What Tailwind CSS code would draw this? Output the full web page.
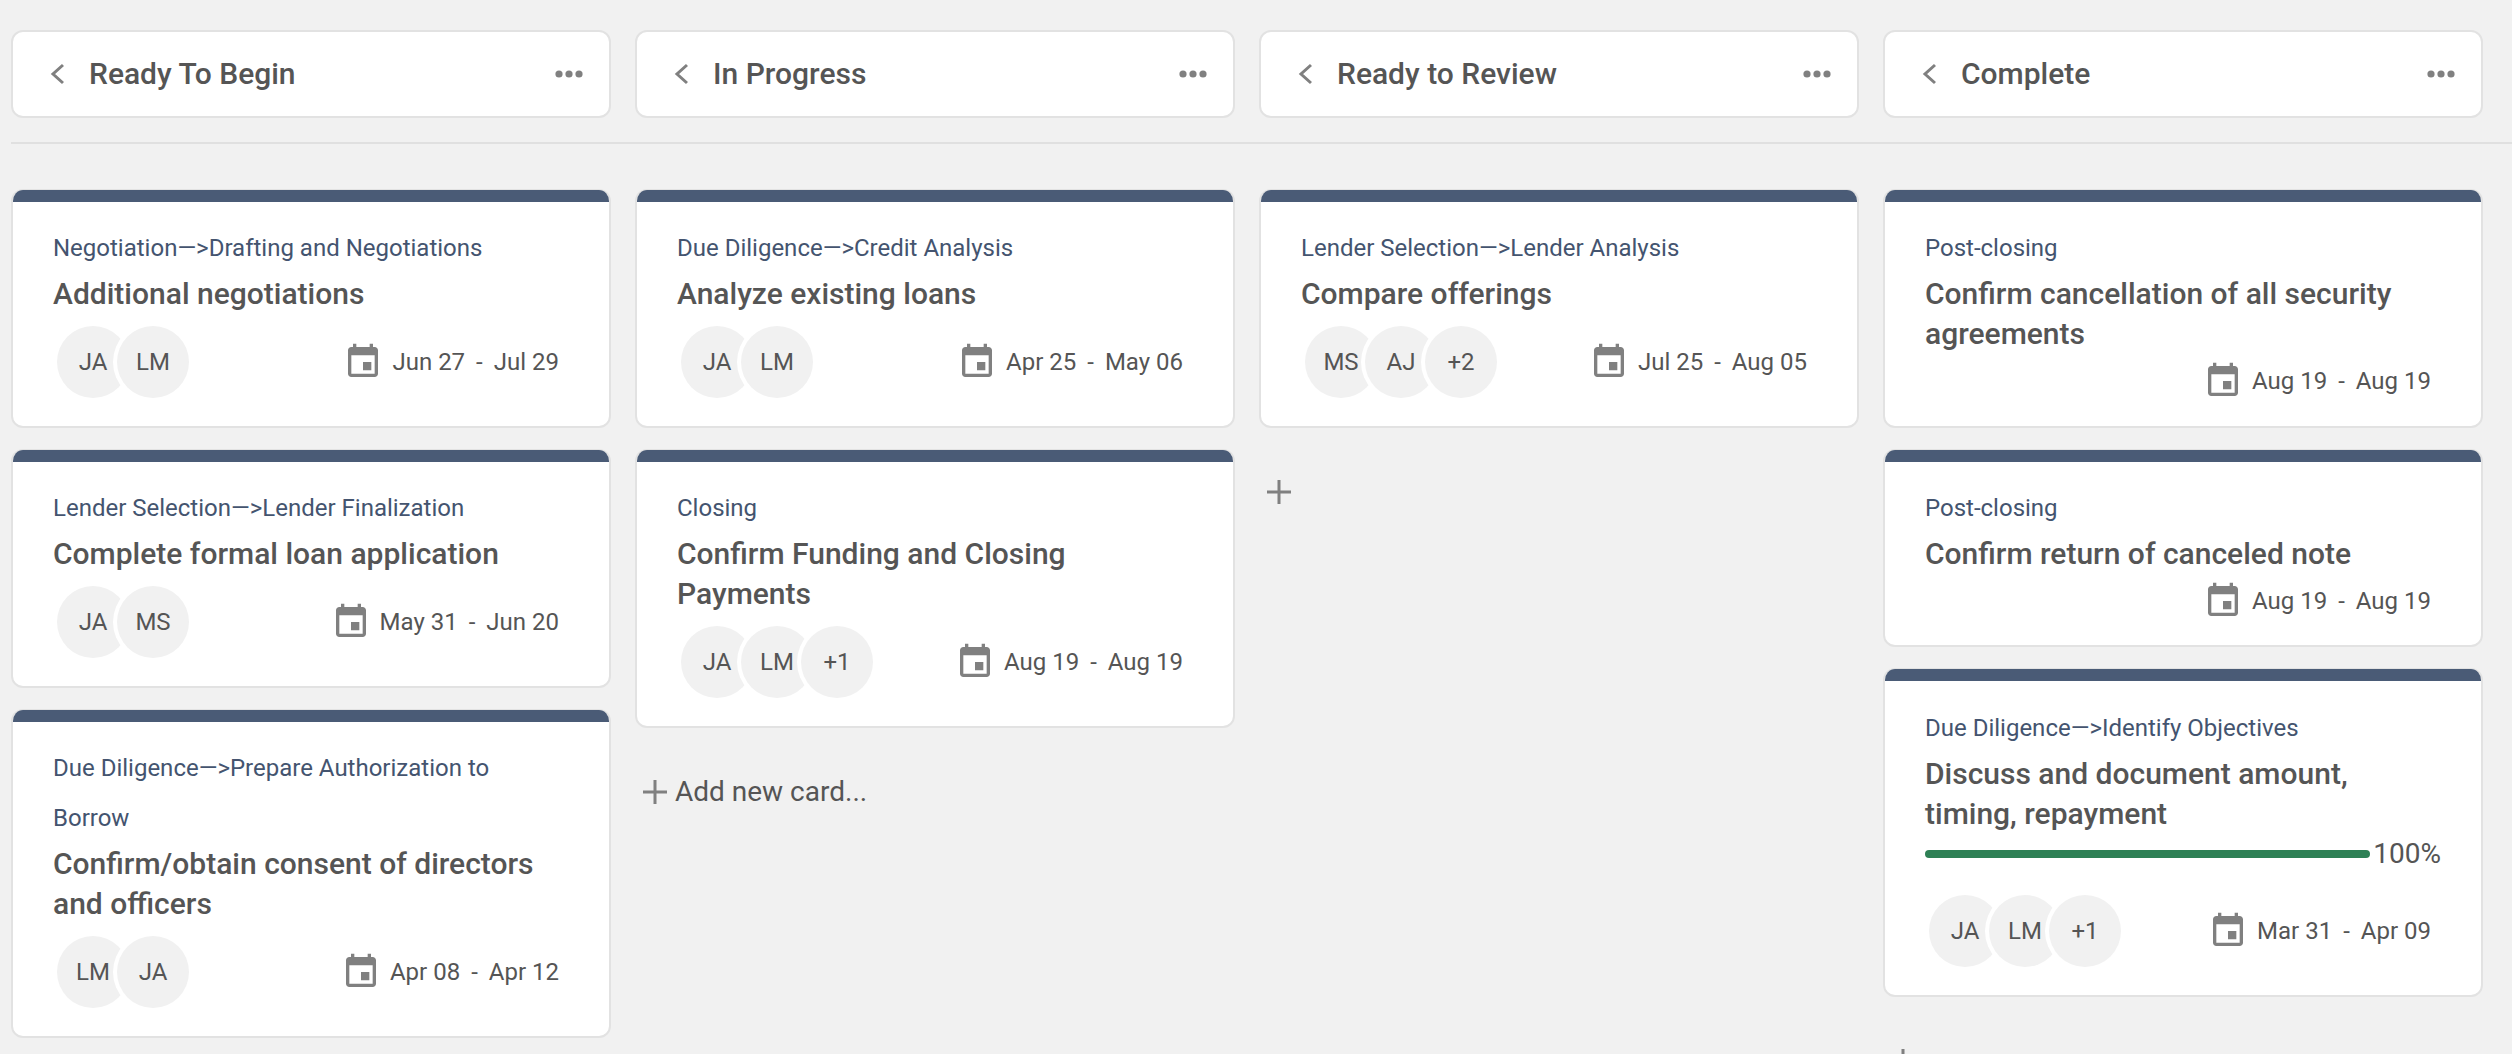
<!DOCTYPE html>
<html lang="en">
<head>
  <meta charset="UTF-8" />
  <title>Board</title>
  <script src="https://cdn.jsdelivr.net/npm/@tailwindcss/browser@4"></script>
</head>
<body class="bg-[#f1f1f1] h-[1054px] overflow-hidden font-['Roboto',sans-serif] text-[#555555]">
  <!-- Column headers -->
  <div class="pt-[30px] ml-[11px] h-[144px] border-b-2 border-[#e0e0e0]">
    <div class="grid grid-cols-[600px_600px_600px_600px] gap-[24px]">
      <div class="h-[88px] bg-white border-2 border-[#e2e2e2] rounded-[12px] flex items-center pl-[37px] pr-[26px]">
        <svg class="w-[16px] h-[24px] shrink-0" viewBox="0 0 16 24" fill="none" stroke="#808080" stroke-width="3"><path d="M13 3 L3 12 L13 21"/></svg>
        <span class="ml-[23px] pb-[2px] flex-1 text-[30px] font-medium">Ready To Begin</span>
        <svg class="w-[28px] h-[8px]" viewBox="0 0 28 8" fill="#808080"><circle cx="4" cy="4" r="3.6"/><circle cx="14" cy="4" r="3.6"/><circle cx="24" cy="4" r="3.6"/></svg>
      </div>
      <div class="h-[88px] bg-white border-2 border-[#e2e2e2] rounded-[12px] flex items-center pl-[37px] pr-[26px]">
        <svg class="w-[16px] h-[24px] shrink-0" viewBox="0 0 16 24" fill="none" stroke="#808080" stroke-width="3"><path d="M13 3 L3 12 L13 21"/></svg>
        <span class="ml-[23px] pb-[2px] flex-1 text-[30px] font-medium">In Progress</span>
        <svg class="w-[28px] h-[8px]" viewBox="0 0 28 8" fill="#808080"><circle cx="4" cy="4" r="3.6"/><circle cx="14" cy="4" r="3.6"/><circle cx="24" cy="4" r="3.6"/></svg>
      </div>
      <div class="h-[88px] bg-white border-2 border-[#e2e2e2] rounded-[12px] flex items-center pl-[37px] pr-[26px]">
        <svg class="w-[16px] h-[24px] shrink-0" viewBox="0 0 16 24" fill="none" stroke="#808080" stroke-width="3"><path d="M13 3 L3 12 L13 21"/></svg>
        <span class="ml-[23px] pb-[2px] flex-1 text-[30px] font-medium">Ready to Review</span>
        <svg class="w-[28px] h-[8px]" viewBox="0 0 28 8" fill="#808080"><circle cx="4" cy="4" r="3.6"/><circle cx="14" cy="4" r="3.6"/><circle cx="24" cy="4" r="3.6"/></svg>
      </div>
      <div class="h-[88px] bg-white border-2 border-[#e2e2e2] rounded-[12px] flex items-center pl-[37px] pr-[26px]">
        <svg class="w-[16px] h-[24px] shrink-0" viewBox="0 0 16 24" fill="none" stroke="#808080" stroke-width="3"><path d="M13 3 L3 12 L13 21"/></svg>
        <span class="ml-[23px] pb-[2px] flex-1 text-[30px] font-medium">Complete</span>
        <svg class="w-[28px] h-[8px]" viewBox="0 0 28 8" fill="#808080"><circle cx="4" cy="4" r="3.6"/><circle cx="14" cy="4" r="3.6"/><circle cx="24" cy="4" r="3.6"/></svg>
      </div>
    </div>
  </div>

  <!-- Board -->
  <div class="pt-[45px] pl-[11px] grid grid-cols-[600px_600px_600px_600px] gap-[24px] items-start">

    <!-- Ready To Begin -->
    <div class="flex flex-col gap-[21px]">
      <div class="bg-white border-2 border-t border-[#e2e2e2] rounded-[12px] overflow-hidden pb-[26px]">
        <div class="h-[12px] bg-[#4a5b76]"></div>
        <div class="pl-[40px] pr-[50px] pt-[21px]">
          <p class="text-[24px] leading-[50px] text-[#44546f]">Negotiation—&gt;Drafting and Negotiations</p>
          <p class="pt-px text-[30px] leading-[40px] font-medium">Additional negotiations</p>
          <div class="mt-[12px] mb-[2px] h-[72px] flex items-center justify-between">
            <div class="flex ml-[4px] text-[24px]">
              <div class="w-[72px] h-[72px] rounded-full bg-[#f1f1f1] flex items-center justify-center">JA</div>
              <div class="w-[72px] h-[72px] rounded-full bg-[#f1f1f1] flex items-center justify-center -ml-[12px] ring-4 ring-white">LM</div>
            </div>
            <div class="flex items-center text-[24px]">
              <svg class="w-[40px] h-[40px] mr-[9px]" viewBox="0 0 24 24" fill="#808080"><path d="M17 12h-5v5h5v-5zM16 1v2H8V1H6v2H5c-1.11 0-1.99.9-1.99 2L3 19c0 1.1.89 2 2 2h14c1.1 0 2-.9 2-2V5c0-1.1-.9-2-2-2h-1V1h-2zm3 18H5V8h14v11z"/></svg>
              <span>Jun 27</span><span class="mx-[11px]">-</span><span>Jul 29</span>
            </div>
          </div>
        </div>
      </div>
      <div class="bg-white border-2 border-t border-[#e2e2e2] rounded-[12px] overflow-hidden pb-[26px]">
        <div class="h-[12px] bg-[#4a5b76]"></div>
        <div class="pl-[40px] pr-[50px] pt-[21px]">
          <p class="text-[24px] leading-[50px] text-[#44546f]">Lender Selection—&gt;Lender Finalization</p>
          <p class="pt-px text-[30px] leading-[40px] font-medium">Complete formal loan application</p>
          <div class="mt-[12px] mb-[2px] h-[72px] flex items-center justify-between">
            <div class="flex ml-[4px] text-[24px]">
              <div class="w-[72px] h-[72px] rounded-full bg-[#f1f1f1] flex items-center justify-center">JA</div>
              <div class="w-[72px] h-[72px] rounded-full bg-[#f1f1f1] flex items-center justify-center -ml-[12px] ring-4 ring-white">MS</div>
            </div>
            <div class="flex items-center text-[24px]">
              <svg class="w-[40px] h-[40px] mr-[9px]" viewBox="0 0 24 24" fill="#808080"><path d="M17 12h-5v5h5v-5zM16 1v2H8V1H6v2H5c-1.11 0-1.99.9-1.99 2L3 19c0 1.1.89 2 2 2h14c1.1 0 2-.9 2-2V5c0-1.1-.9-2-2-2h-1V1h-2zm3 18H5V8h14v11z"/></svg>
              <span>May 31</span><span class="mx-[11px]">-</span><span>Jun 20</span>
            </div>
          </div>
        </div>
      </div>
      <div class="bg-white border-2 border-t border-[#e2e2e2] rounded-[12px] overflow-hidden pb-[26px]">
        <div class="h-[12px] bg-[#4a5b76]"></div>
        <div class="pl-[40px] pr-[50px] pt-[21px]">
          <p class="text-[24px] leading-[50px] text-[#44546f]">Due Diligence—&gt;Prepare Authorization to Borrow</p>
          <p class="pt-px text-[30px] leading-[40px] font-medium">Confirm/obtain consent of directors and officers</p>
          <div class="mt-[12px] mb-[2px] h-[72px] flex items-center justify-between">
            <div class="flex ml-[4px] text-[24px]">
              <div class="w-[72px] h-[72px] rounded-full bg-[#f1f1f1] flex items-center justify-center">LM</div>
              <div class="w-[72px] h-[72px] rounded-full bg-[#f1f1f1] flex items-center justify-center -ml-[12px] ring-4 ring-white">JA</div>
            </div>
            <div class="flex items-center text-[24px]">
              <svg class="w-[40px] h-[40px] mr-[9px]" viewBox="0 0 24 24" fill="#808080"><path d="M17 12h-5v5h5v-5zM16 1v2H8V1H6v2H5c-1.11 0-1.99.9-1.99 2L3 19c0 1.1.89 2 2 2h14c1.1 0 2-.9 2-2V5c0-1.1-.9-2-2-2h-1V1h-2zm3 18H5V8h14v11z"/></svg>
              <span>Apr 08</span><span class="mx-[11px]">-</span><span>Apr 12</span>
            </div>
          </div>
        </div>
      </div>
    </div>

    <!-- In Progress -->
    <div class="flex flex-col gap-[21px]">
      <div class="bg-white border-2 border-t border-[#e2e2e2] rounded-[12px] overflow-hidden pb-[26px]">
        <div class="h-[12px] bg-[#4a5b76]"></div>
        <div class="pl-[40px] pr-[50px] pt-[21px]">
          <p class="text-[24px] leading-[50px] text-[#44546f]">Due Diligence—&gt;Credit Analysis</p>
          <p class="pt-px text-[30px] leading-[40px] font-medium">Analyze existing loans</p>
          <div class="mt-[12px] mb-[2px] h-[72px] flex items-center justify-between">
            <div class="flex ml-[4px] text-[24px]">
              <div class="w-[72px] h-[72px] rounded-full bg-[#f1f1f1] flex items-center justify-center">JA</div>
              <div class="w-[72px] h-[72px] rounded-full bg-[#f1f1f1] flex items-center justify-center -ml-[12px] ring-4 ring-white">LM</div>
            </div>
            <div class="flex items-center text-[24px]">
              <svg class="w-[40px] h-[40px] mr-[9px]" viewBox="0 0 24 24" fill="#808080"><path d="M17 12h-5v5h5v-5zM16 1v2H8V1H6v2H5c-1.11 0-1.99.9-1.99 2L3 19c0 1.1.89 2 2 2h14c1.1 0 2-.9 2-2V5c0-1.1-.9-2-2-2h-1V1h-2zm3 18H5V8h14v11z"/></svg>
              <span>Apr 25</span><span class="mx-[11px]">-</span><span>May 06</span>
            </div>
          </div>
        </div>
      </div>
      <div class="bg-white border-2 border-t border-[#e2e2e2] rounded-[12px] overflow-hidden pb-[26px]">
        <div class="h-[12px] bg-[#4a5b76]"></div>
        <div class="pl-[40px] pr-[50px] pt-[21px]">
          <p class="text-[24px] leading-[50px] text-[#44546f]">Closing</p>
          <p class="pt-px text-[30px] leading-[40px] font-medium max-w-[420px]">Confirm Funding and Closing Payments</p>
          <div class="mt-[12px] mb-[2px] h-[72px] flex items-center justify-between">
            <div class="flex ml-[4px] text-[24px]">
              <div class="w-[72px] h-[72px] rounded-full bg-[#f1f1f1] flex items-center justify-center">JA</div>
              <div class="w-[72px] h-[72px] rounded-full bg-[#f1f1f1] flex items-center justify-center -ml-[12px] ring-4 ring-white">LM</div>
              <div class="w-[72px] h-[72px] rounded-full bg-[#f1f1f1] flex items-center justify-center -ml-[12px] ring-4 ring-white">+1</div>
            </div>
            <div class="flex items-center text-[24px]">
              <svg class="w-[40px] h-[40px] mr-[9px]" viewBox="0 0 24 24" fill="#808080"><path d="M17 12h-5v5h5v-5zM16 1v2H8V1H6v2H5c-1.11 0-1.99.9-1.99 2L3 19c0 1.1.89 2 2 2h14c1.1 0 2-.9 2-2V5c0-1.1-.9-2-2-2h-1V1h-2zm3 18H5V8h14v11z"/></svg>
              <span>Aug 19</span><span class="mx-[11px]">-</span><span>Aug 19</span>
            </div>
          </div>
        </div>
      </div>
      <div class="mt-[23px] pl-[8px] h-[40px] flex items-center text-[28px]">
        <svg class="w-[24px] h-[24px] mr-[8px]" viewBox="0 0 24 24" stroke="#808080" stroke-width="3"><path d="M12 0V24M0 12H24"/></svg>
        <span>Add new card...</span>
      </div>
    </div>

    <!-- Ready to Review -->
    <div class="flex flex-col gap-[21px]">
      <div class="bg-white border-2 border-t border-[#e2e2e2] rounded-[12px] overflow-hidden pb-[26px]">
        <div class="h-[12px] bg-[#4a5b76]"></div>
        <div class="pl-[40px] pr-[50px] pt-[21px]">
          <p class="text-[24px] leading-[50px] text-[#44546f]">Lender Selection—&gt;Lender Analysis</p>
          <p class="pt-px text-[30px] leading-[40px] font-medium">Compare offerings</p>
          <div class="mt-[12px] mb-[2px] h-[72px] flex items-center justify-between">
            <div class="flex ml-[4px] text-[24px]">
              <div class="w-[72px] h-[72px] rounded-full bg-[#f1f1f1] flex items-center justify-center">MS</div>
              <div class="w-[72px] h-[72px] rounded-full bg-[#f1f1f1] flex items-center justify-center -ml-[12px] ring-4 ring-white">AJ</div>
              <div class="w-[72px] h-[72px] rounded-full bg-[#f1f1f1] flex items-center justify-center -ml-[12px] ring-4 ring-white">+2</div>
            </div>
            <div class="flex items-center text-[24px]">
              <svg class="w-[40px] h-[40px] mr-[9px]" viewBox="0 0 24 24" fill="#808080"><path d="M17 12h-5v5h5v-5zM16 1v2H8V1H6v2H5c-1.11 0-1.99.9-1.99 2L3 19c0 1.1.89 2 2 2h14c1.1 0 2-.9 2-2V5c0-1.1-.9-2-2-2h-1V1h-2zm3 18H5V8h14v11z"/></svg>
              <span>Jul 25</span><span class="mx-[11px]">-</span><span>Aug 05</span>
            </div>
          </div>
        </div>
      </div>
      <div class="mt-[23px] pl-[8px] h-[40px] flex items-center">
        <svg class="w-[24px] h-[24px]" viewBox="0 0 24 24" stroke="#808080" stroke-width="3"><path d="M12 0V24M0 12H24"/></svg>
      </div>
    </div>

    <!-- Complete -->
    <div class="flex flex-col gap-[21px]">
      <div class="bg-white border-2 border-t border-[#e2e2e2] rounded-[12px] overflow-hidden pb-[26px]">
        <div class="h-[12px] bg-[#4a5b76]"></div>
        <div class="pl-[40px] pr-[50px] pt-[21px]">
          <p class="text-[24px] leading-[50px] text-[#44546f]">Post-closing</p>
          <p class="pt-px text-[30px] leading-[40px] font-medium">Confirm cancellation of all security agreements</p>
          <div class="mt-[8px] h-[38px] flex items-center justify-end text-[24px]">
            <svg class="w-[40px] h-[40px] mr-[9px]" viewBox="0 0 24 24" fill="#808080"><path d="M17 12h-5v5h5v-5zM16 1v2H8V1H6v2H5c-1.11 0-1.99.9-1.99 2L3 19c0 1.1.89 2 2 2h14c1.1 0 2-.9 2-2V5c0-1.1-.9-2-2-2h-1V1h-2zm3 18H5V8h14v11z"/></svg>
            <span>Aug 19</span><span class="mx-[11px]">-</span><span>Aug 19</span>
          </div>
        </div>
      </div>
      <div class="bg-white border-2 border-t border-[#e2e2e2] rounded-[12px] overflow-hidden pb-[25px]">
        <div class="h-[12px] bg-[#4a5b76]"></div>
        <div class="pl-[40px] pr-[50px] pt-[21px]">
          <p class="text-[24px] leading-[50px] text-[#44546f]">Post-closing</p>
          <p class="pt-px text-[30px] leading-[40px] font-medium">Confirm return of canceled note</p>
          <div class="mt-[8px] h-[38px] flex items-center justify-end text-[24px]">
            <svg class="w-[40px] h-[40px] mr-[9px]" viewBox="0 0 24 24" fill="#808080"><path d="M17 12h-5v5h5v-5zM16 1v2H8V1H6v2H5c-1.11 0-1.99.9-1.99 2L3 19c0 1.1.89 2 2 2h14c1.1 0 2-.9 2-2V5c0-1.1-.9-2-2-2h-1V1h-2zm3 18H5V8h14v11z"/></svg>
            <span>Aug 19</span><span class="mx-[11px]">-</span><span>Aug 19</span>
          </div>
        </div>
      </div>
      <div class="bg-white border-2 border-t border-[#e2e2e2] rounded-[12px] overflow-hidden pb-[26px]">
        <div class="h-[12px] bg-[#4a5b76]"></div>
        <div class="pl-[40px] pr-[50px] pt-[22px]">
          <p class="text-[24px] leading-[50px] text-[#44546f]">Due Diligence—&gt;Identify Objectives</p>
          <p class="pt-px text-[30px] leading-[40px] font-medium">Discuss and document amount, timing, repayment</p>
          <div class="h-[40px] flex items-center -mr-[10px] text-[28px]">
            <div class="flex-1 h-[8px] rounded-full bg-[#2e8055]"></div>
            <span class="ml-[3px]">100%</span>
          </div>
          <div class="mt-[21px] mb-[2px] h-[72px] flex items-center justify-between">
            <div class="flex ml-[4px] text-[24px]">
              <div class="w-[72px] h-[72px] rounded-full bg-[#f1f1f1] flex items-center justify-center">JA</div>
              <div class="w-[72px] h-[72px] rounded-full bg-[#f1f1f1] flex items-center justify-center -ml-[12px] ring-4 ring-white">LM</div>
              <div class="w-[72px] h-[72px] rounded-full bg-[#f1f1f1] flex items-center justify-center -ml-[12px] ring-4 ring-white">+1</div>
            </div>
            <div class="flex items-center text-[24px]">
              <svg class="w-[40px] h-[40px] mr-[9px]" viewBox="0 0 24 24" fill="#808080"><path d="M17 12h-5v5h5v-5zM16 1v2H8V1H6v2H5c-1.11 0-1.99.9-1.99 2L3 19c0 1.1.89 2 2 2h14c1.1 0 2-.9 2-2V5c0-1.1-.9-2-2-2h-1V1h-2zm3 18H5V8h14v11z"/></svg>
              <span>Mar 31</span><span class="mx-[11px]">-</span><span>Apr 09</span>
            </div>
          </div>
        </div>
      </div>
      <div class="mt-[23px] pl-[8px] h-[40px] flex items-center">
        <svg class="w-[24px] h-[24px]" viewBox="0 0 24 24" stroke="#808080" stroke-width="3"><path d="M12 0V24M0 12H24"/></svg>
      </div>
    </div>
  </div>
</body>
</html>
